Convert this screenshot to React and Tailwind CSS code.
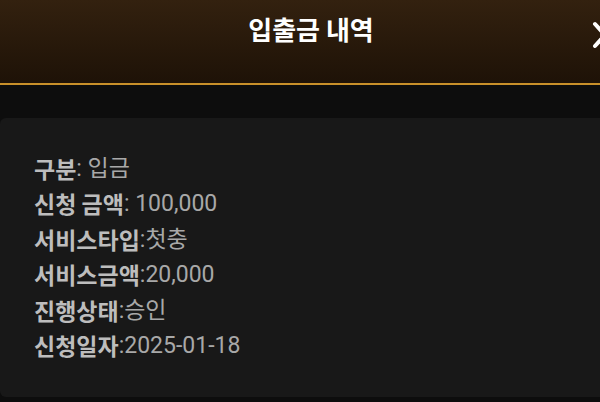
export default function App() {
  const rows = [
    ["구분", ": 입금"],
    ["신청 금액", ": 100,000"],
    ["서비스타입", ":첫충"],
    ["서비스금액", ":20,000"],
    ["진행상태", ":승인"],
    ["신청일자", ":2025-01-18"],
  ];
  return (
    <div
      className="w-[600px] h-[402px] overflow-hidden bg-[#0d0d0d]"
      style={{ fontFamily: 'Roboto, "Noto Sans CJK KR", sans-serif' }}
    >
      <div className="relative h-[83px] bg-gradient-to-b from-[#33210f] to-[#1e1207] flex justify-center pl-[22px] pt-[11px]">
        <div className="text-white font-bold text-[26px] leading-[36px]" style={{ fontFamily: '"Noto Sans CJK KR", sans-serif' }}>
          입출금 내역
        </div>
        <svg className="absolute left-[590px] top-[20px]" width="30" height="30" viewBox="0 0 30 30">
          <path d="M5 4 L25 26 M25 4 L5 26" stroke="white" strokeWidth="4" strokeLinecap="round" />
        </svg>
      </div>
      <div className="h-[1.5px] bg-[#c8902a]" />
      <div className="pt-[33px]">
        <div className="bg-[#181818] rounded-l-[6px] h-[279px] pl-[34px] pt-[33px]">
          {rows.map(([k, v]) => (
            <div key={k} className="flex items-center h-[35.5px] text-[23px] leading-none whitespace-pre">
              <span className="font-bold text-[#bdbdbd]" style={{ fontFamily: '"Noto Sans CJK KR", sans-serif' }}>{k}</span>
              <span className="text-[#a8a8a8]">{v}</span>
            </div>
          ))}
        </div>
      </div>
    </div>
  );
}
